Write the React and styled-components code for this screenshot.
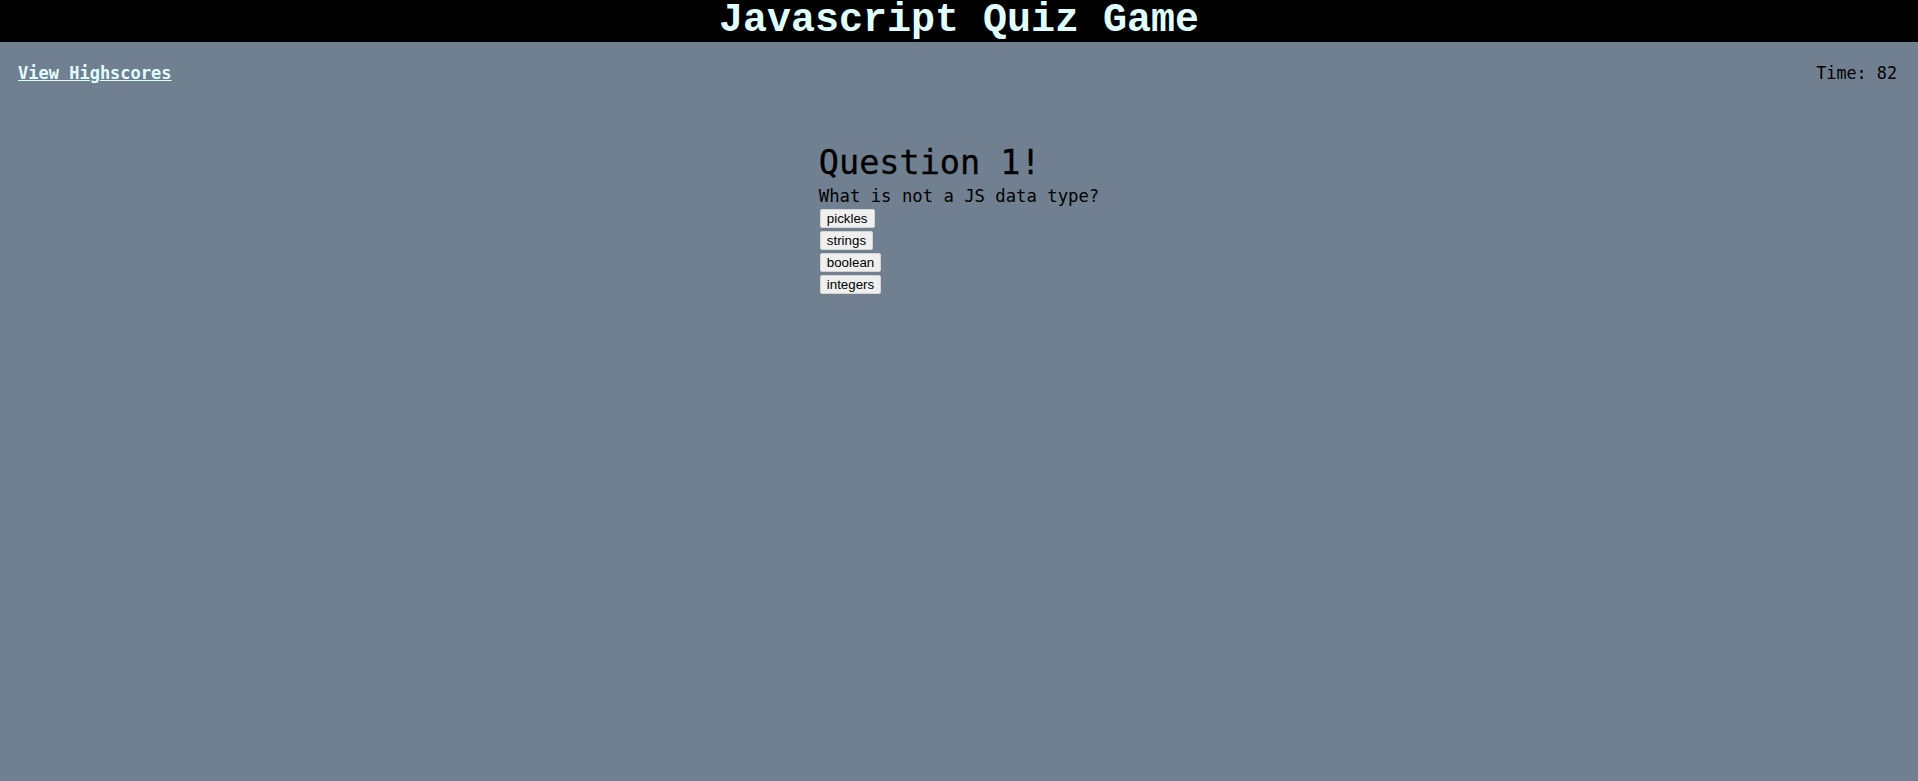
import React from "react"
import styled, { createGlobalStyle } from "styled-components"

const GlobalStyle = createGlobalStyle`
  html, body {
    margin: 0;
    padding: 0;
    background-color: slategray;
    min-height: 100%;
  }
  body {
    font-family: "DejaVu Sans Mono", "Liberation Mono", monospace;
    color: black;
  }
`

const Header = styled.header`
  background-color: black;
  height: 42px;
  display: flex;
  align-items: center;
  justify-content: center;
`

const Title = styled.h1`
  margin: 0;
  font-family: "Liberation Mono", "Courier New", monospace;
  font-size: 40px;
  font-weight: bold;
  color: lightcyan;
  line-height: 42px;
`

const TopBar = styled.nav`
  display: flex;
  justify-content: space-between;
  align-items: center;
  padding: 21px 21px 0 18px;
`

const HighscoreLink = styled.a`
  color: lightcyan;
  font-weight: bold;
  font-size: 17px;
  text-decoration: underline;
  cursor: pointer;
`

const Timer = styled.div`
  font-size: 16.8px;
  color: black;
`

const Main = styled.main`
  display: flex;
  justify-content: center;
  padding-top: 61px;
`

const QuizCard = styled.section`
  display: flex;
  flex-direction: column;
  align-items: flex-start;
`

const QuestionTitle = styled.h2`
  margin: 0 0 4px;
  font-size: 33.5px;
  font-weight: normal;
  line-height: 38px;
  -webkit-text-stroke: 0.3px black;
`

const QuestionText = styled.p`
  margin: 0 0 3px;
  font-size: 17.25px;
  line-height: 20px;
`

const Choice = styled.button`
  font-family: Arial, "Liberation Sans", sans-serif;
  font-size: 13.33px;
  margin: 0 0 3px 1px;
  padding: 1px 6px;
  height: 19px;
  line-height: 15px;
  background-color: #efefef;
  border: 1px solid #d4d4d4;
  border-radius: 2px;
  color: black;
`

const choices = ["pickles", "strings", "boolean", "integers"]

export default function App() {
  return (
    <>
      <GlobalStyle />
      <Header>
        <Title>Javascript Quiz Game</Title>
      </Header>
      <TopBar>
        <HighscoreLink>View Highscores</HighscoreLink>
        <Timer>Time: 82</Timer>
      </TopBar>
      <Main>
        <QuizCard>
          <QuestionTitle>Question 1!</QuestionTitle>
          <QuestionText>What is not a JS data type?</QuestionText>
          {choices.map(c => (
            <Choice key={c}>{c}</Choice>
          ))}
        </QuizCard>
      </Main>
    </>
  )
}
